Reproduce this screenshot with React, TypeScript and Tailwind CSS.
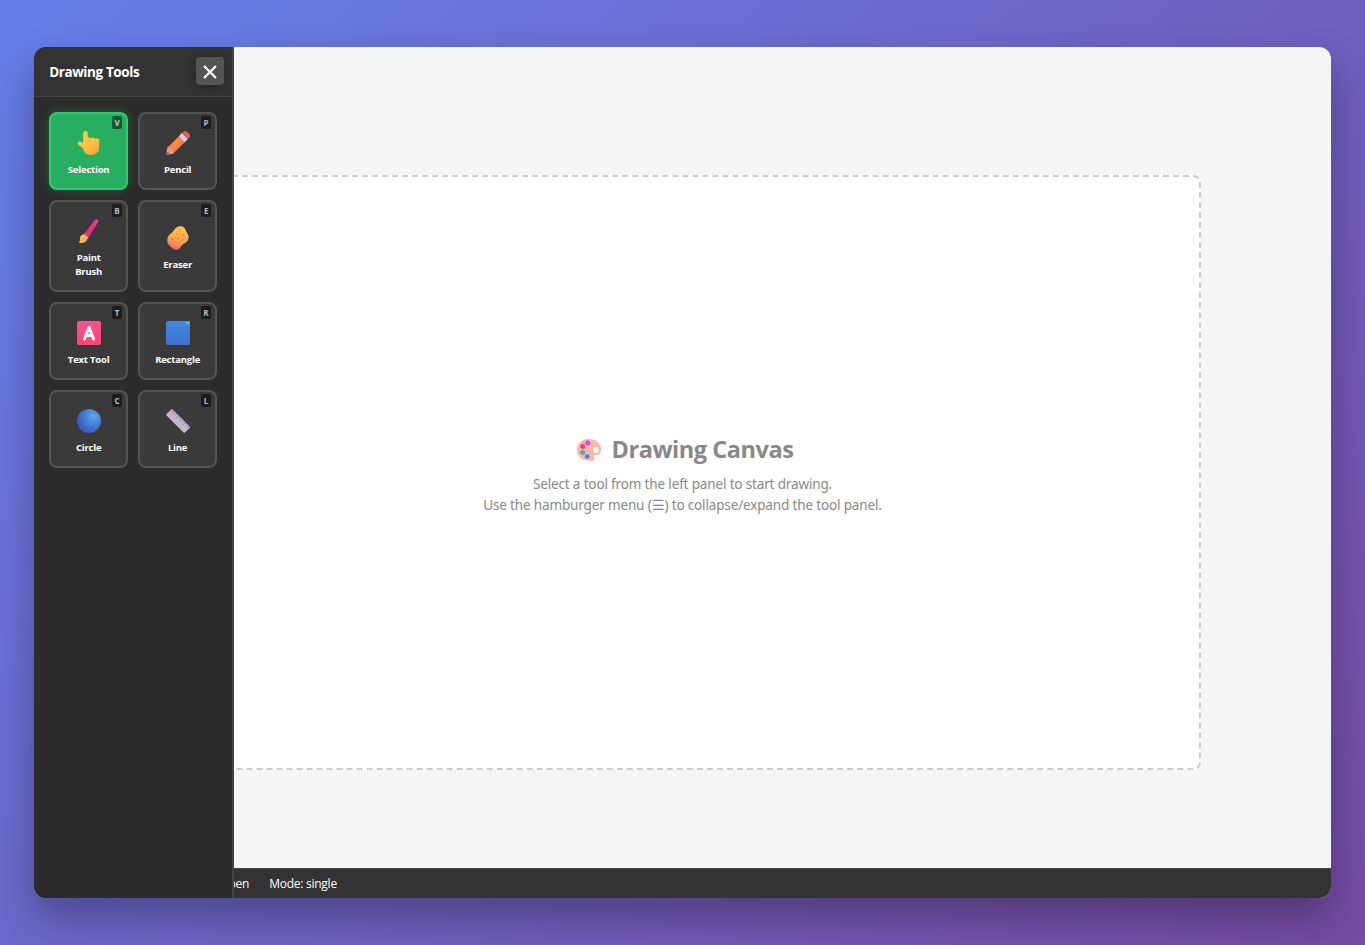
import type { ReactNode } from "react";

function PointingHand() {
  return (
    <svg viewBox="0 0 24 24" className="size-6">
      <defs>
        <linearGradient id="hand" x1="0.2" y1="0" x2="0.8" y2="1">
          <stop offset="0" stopColor="#ffc83a" />
          <stop offset="0.6" stopColor="#ffc247" />
          <stop offset="1" stopColor="#f5a13d" />
        </linearGradient>
      </defs>
      <path
        d="M8.5 0C7.100 0 6.100 1 6.100 2.300v9.700l-2.400-1.200c-1.200-.6-2.500-.1-2.900.8-.5 1 0 2 .9 2.600l3.400 2.400c.8.6 1.100 1.200 1.600 2.400 1 3.500 3.300 5 7.200 5 5.200 0 8.300-3.100 8.300-8.100v-6c0-1.600-1-2.400-2.300-2.400-.7 0-1.200.1-1.700.4-.5-.8-1.300-1.200-2.200-1.200-.8 0-1.400.2-1.900.5-.5-.5-1.200-.7-1.900-.7-.5 0-1 .1-1.400.3V2.300C10.800 1 9.800 0 8.500 0Z"
        fill="url(#hand)"
      />
      <path d="M10.8 8v4.4M14.200 8v4.200M18.300 8.700v3.700" stroke="#f5ad3e" strokeWidth="0.5" fill="none" />
    </svg>
  );
}

function Pencil() {
  return (
    <svg viewBox="0 0 24 24" className="size-6">
      <defs>
        <linearGradient id="wood" x1="0.25" y1="0.25" x2="0.75" y2="0.75">
          <stop offset="0" stopColor="#ff793d" />
          <stop offset="0.5" stopColor="#ff8b45" />
          <stop offset="1" stopColor="#ef6838" />
        </linearGradient>
      </defs>
      <path d="M.2 22.8 1.5 16.6 12.8 5.3l5.9 5.9L7.4 22.5 1.4 23.8c-.8.1-1.3-.3-1.2-1Z" fill="url(#wood)" />
      <path d="M.2 22.8 1.5 16.6c2.6.2 5.4 3 5.9 5.9l-6 1.3c-.8.1-1.3-.3-1.2-1Z" fill="#d99a86" />
      <path d="m.7 20.7-.5 2.2c-.1.6.3 1 1 .9l2.2-.5c-.3-1.4-1.3-2.4-2.7-2.6Z" fill="#735b70" />
      <path d="m12.8 5.3 3.2-3.2L21.9 8l-3.2 3.2Z" fill="#ded1e4" />
      <path d="m16 2.1 1.5-1.4c1-.9 2.4-.9 3.4 0l2.4 2.4c1 1 1 2.4 0 3.4L21.9 8Z" fill="#f95450" />
    </svg>
  );
}

function Brush() {
  return (
    <svg viewBox="0 0 24 24" className="size-6">
      <defs>
        <linearGradient id="handle" x1="1" y1="0" x2="0" y2="1">
          <stop offset="0" stopColor="#ef3aa5" />
          <stop offset="1" stopColor="#f42560" />
        </linearGradient>
        <linearGradient id="bristle" x1="0" y1="0" x2="1" y2="1">
          <stop offset="0" stopColor="#ffcf69" />
          <stop offset="1" stopColor="#f59744" />
        </linearGradient>
      </defs>
      <path d="M17.7 1c.8-.9 2.2-1.1 3-.4.8.8.8 2.1.1 3L11.700 18 7.500 14.500Z" fill="url(#handle)" />
      <path d="m7.500 14.200 4.300 3.700-1.600 2.400-4.600-4Z" fill="#979aa1" />
      <path d="M5.700 15.800c2.800.2 4.800 1.900 4.600 4.100-.2 2.900-4 4.600-7.800 3.800-.6-.1-.7-.7-.2-1.100 1-1 .4-2 .7-3.500.3-2 1.200-3.200 2.700-3.300Z" fill="url(#bristle)" />
    </svg>
  );
}

function Sponge() {
  return (
    <svg viewBox="0 0 24 24" className="size-6">
      <defs>
        <linearGradient id="sponge" x1="0.7" y1="0" x2="0.4" y2="1">
          <stop offset="0" stopColor="#ffc850" />
          <stop offset="0.65" stopColor="#f8a052" />
          <stop offset="1" stopColor="#f36879" />
        </linearGradient>
      </defs>
      <path
        d="M9.500 2.200C11.400.2 14.600-.4 17 .8c2.200 1.100 2.400 3.400 3.500 5.300 1 1.700 2.200 2.900 2.100 5.400-.1 3.300-2.500 5-4.900 6.200-2.500 1.300-3.400 5.500-6.700 6-2.700.4-4.300-1.200-5.800-2.600-1.600-1.400-3.600-2.600-3.900-5.500-.2-3.300.4-5.700 3.300-7.900 2.200-1.600 3-3.500 4.900-5.500Z"
        fill="url(#sponge)"
      />
      <g fill="#d9843b">
        <circle cx="14" cy="4.5" r=".7" />
        <circle cx="11" cy="8" r=".7" />
        <circle cx="17.5" cy="9" r=".9" />
        <circle cx="6" cy="13" r="1" />
        <circle cx="12" cy="12.5" r="1.1" />
        <circle cx="17" cy="13.5" r=".7" />
        <circle cx="8.5" cy="16.5" r=".7" />
        <circle cx="14" cy="9" r=".5" />
        <circle cx="4.5" cy="16.5" r=".5" />
        <circle cx="19.5" cy="11.5" r=".5" />
        <circle cx="9" cy="12" r=".5" />
      </g>
    </svg>
  );
}

function LetterTile() {
  return (
    <span className="flex size-6 items-center justify-center rounded-[2px] bg-linear-to-b from-[#fb5090] to-[#fb4671]">
      <svg viewBox="0 0 24 24" className="size-6">
        <path d="M7.4 18 12 6.4 16.6 18M9 14.5h6" fill="none" stroke="#fff3fa" strokeWidth="3" strokeLinecap="round" strokeLinejoin="round" />
      </svg>
    </span>
  );
}

function BlueSquare() {
  return (
    <svg viewBox="0 0 24 24" className="size-6">
      <defs>
        <linearGradient id="square" x1="0" y1="0" x2="0" y2="1">
          <stop offset="0" stopColor="#3d8bdc" />
          <stop offset="1" stopColor="#426fd0" />
        </linearGradient>
        <radialGradient id="glint" cx="0.92" cy="0.08" r="0.13">
          <stop offset="0" stopColor="#66b8f2" />
          <stop offset="1" stopColor="#66b8f2" stopOpacity="0" />
        </radialGradient>
      </defs>
      <rect width="24" height="24" rx="1.8" fill="url(#square)" />
      <rect width="24" height="24" rx="1.8" fill="url(#glint)" />
    </svg>
  );
}

function BlueBall() {
  return (
    <svg viewBox="0 0 24 24" className="size-6">
      <defs>
        <radialGradient id="ball" cx="0.7" cy="0.3" r="0.75">
          <stop offset="0" stopColor="#60a9ea" />
          <stop offset="0.5" stopColor="#427fd4" />
          <stop offset="1" stopColor="#3d55bd" />
        </radialGradient>
      </defs>
      <circle cx="12" cy="12" r="12" fill="url(#ball)" />
    </svg>
  );
}

function Ruler() {
  return (
    <svg viewBox="0 0 24 24" className="size-6">
      <path d="M.5 5.100 5.200.4c.5-.5 1-.4 1.500 0l16.900 17c.5.5.5 1 0 1.500L19 23.600c-.5.5-1 .5-1.500 0L.5 6.600c-.5-.5-.5-1 0-1.500Z" fill="#c1b9c9" />
      <path
        d="m5.600 1.400 2 1.200-1 1M8.800 3.900l-1.500 1.500M10.500 5.600 9.600 6.500M12.200 7.300l-1.500 1.500M13.900 9 13 9.900M15.600 10.700l-1.500 1.500M17.300 12.400l-.9.9M19 14.100l-1.500 1.500M20.700 15.800l-.9.9M22.400 17.500 21 18.900"
        stroke="#9458e8"
        strokeWidth="1"
        fill="none"
      />
    </svg>
  );
}

function Palette() {
  return (
    <svg viewBox="0 0 24 24" className="mt-px size-6">
      <path
        fillRule="evenodd"
        d="M11.3 1C18.5.7 24 5.2 24 11.200c0 3.300-1.800 5.800-4.400 5.800-1.600 0-3 .3-3 1.500 0 1 .8 1.500.8 2.700 0 1.200-1 1.700-2.500 1.700C6.800 23 0 19 0 11.900 0 5.800 4.700 1.300 11.300 1Zm5.100 9.100v2.800c0 1.100.9 2 2 2h1c1.100 0 2-.9 2-2v-1.900c0-1.100-.9-2-2-2h-1c-1.100 0-2 .3-2 1.100Z"
        fill="#ffb7a3"
      />
      <circle cx="10.8" cy="5" r="2.5" fill="#b857f0" />
      <circle cx="5.7" cy="8.4" r="2.5" fill="#ef3b8d" />
      <circle cx="5.7" cy="14.5" r="2.5" fill="#47b4b4" />
      <circle cx="10.3" cy="18.4" r="2.4" fill="#408de8" />
    </svg>
  );
}

type Tool = { name: string; shortcut: string; icon: ReactNode; active?: boolean };

const tools: Tool[] = [
  { name: "Selection", shortcut: "V", icon: <PointingHand />, active: true },
  { name: "Pencil", shortcut: "P", icon: <Pencil /> },
  { name: "Paint Brush", shortcut: "B", icon: <Brush /> },
  { name: "Eraser", shortcut: "E", icon: <Sponge /> },
  { name: "Text Tool", shortcut: "T", icon: <LetterTile /> },
  { name: "Rectangle", shortcut: "R", icon: <BlueSquare /> },
  { name: "Circle", shortcut: "C", icon: <BlueBall /> },
  { name: "Line", shortcut: "L", icon: <Ruler /> },
];

function ToolButton({ name, shortcut, icon, active }: Tool) {
  return (
    <button
      className={`relative flex flex-col items-center justify-center rounded-lg border-2 px-3 pt-[17px] pb-[11px] text-white ${
        active ? "border-[#2ecc71] bg-[#27ae60] shadow-[0_0_10px_rgba(46,204,113,0.3)]" : "border-[#555] bg-[#3a3a3a]"
      }`}
    >
      <span className="mb-2 size-6">{icon}</span>
      <span className="text-center text-[9.5px] leading-[14px] font-bold tracking-[-0.2px]">{name}</span>
      <span className="absolute top-[2px] right-1 flex h-[13px] min-w-[10px] items-center justify-center rounded-[2px] bg-black/50 px-[2.5px] text-[8px] leading-none font-bold text-white/70">
        {shortcut}
      </span>
    </button>
  );
}

function ToolPanel() {
  return (
    <aside className="absolute inset-y-0 left-0 z-10 w-[200px] border-r-2 border-[#444] bg-[#2c2c2c]">
      <header className="flex h-[50px] items-center justify-between border-b border-[#444] bg-[#333] pr-2 pl-[15px]">
        <h3 className="text-[13.5px] font-bold tracking-[-0.4px] text-white">Drawing Tools</h3>
        <button aria-label="Close" className="mb-[2px] flex size-7 items-center justify-center rounded bg-[#555] shadow-[0_2px_8px_rgba(0,0,0,0.3)]">
          <svg viewBox="0 0 14 14" className="mt-[3px] size-[14px]">
            <path d="m1 1 12 12M13 1 1 13" stroke="white" strokeWidth="2.2" />
          </svg>
        </button>
      </header>
      <div className="grid grid-cols-2 gap-[10px] p-[15px]">
        {tools.map((tool) => (
          <ToolButton key={tool.name} {...tool} />
        ))}
      </div>
    </aside>
  );
}

export default function App() {
  return (
    <div className="flex h-screen items-center justify-center bg-[linear-gradient(135deg,#667eea_0%,#764ba2_100%)] font-['Open_Sans','Noto_Sans',sans-serif]">
      <div className="relative flex h-[90vh] w-[95vw] overflow-hidden rounded-xl bg-[#f5f5f5] shadow-[0_20px_40px_rgba(0,0,0,0.3)]">
        <ToolPanel />
        <main className="flex flex-1 items-center justify-center">
          <section className="flex h-[70%] w-4/5 flex-col items-center justify-center rounded-lg border-2 border-dashed border-[#ccc] bg-white text-center text-[#888]">
            <h2 className="mb-[9px] flex items-center gap-[11px] pt-[4px] pl-[5px] text-[23.5px] leading-8 font-bold tracking-[-0.45px]">
              <Palette />
              Drawing Canvas
            </h2>
            <p className="font-['Noto_Sans',sans-serif] text-[13.5px] leading-[21px] tracking-[-0.15px]">
              Select a tool from the left panel to start drawing.
              <br />
              Use the hamburger menu (☰) to collapse/expand the tool panel.
            </p>
          </section>
        </main>
        <footer className="absolute inset-x-0 bottom-0 flex h-[30px] items-center gap-5 border-t border-[#444] bg-[#333] pt-[2px] pl-[15px] text-[12px] tracking-[-0.25px] text-white">
          <span className="w-[85px]">Tool: Selection</span>
          <span className="w-[95px] text-right">Panel: Open</span>
          <span>Mode: single</span>
        </footer>
      </div>
    </div>
  );
}
